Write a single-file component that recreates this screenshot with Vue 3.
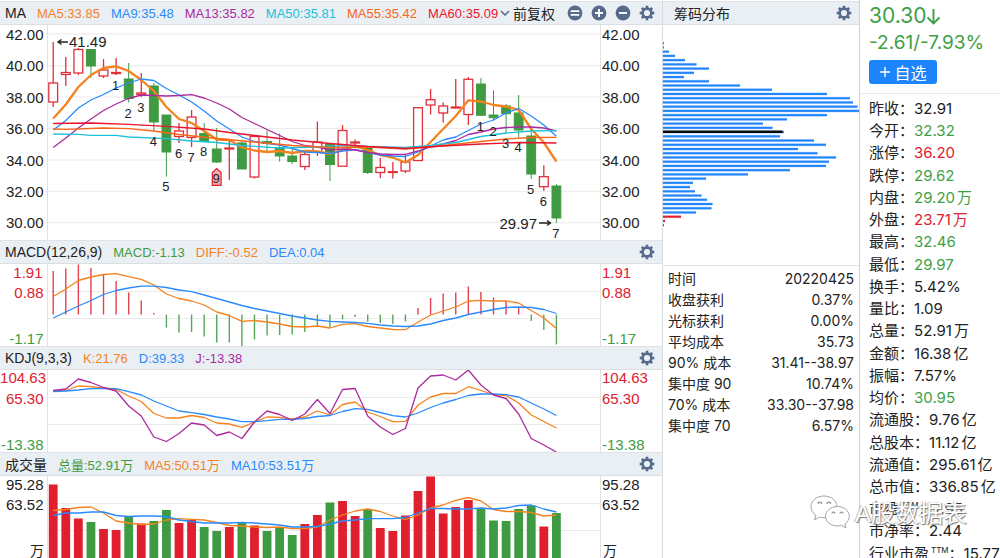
<script setup>
import { ref } from 'vue'

const adjust = ref('前复权')

const RED = '#e0202e'
const GREEN = '#3f9b42'
const ORANGE = '#f5821f'
const BLUE = '#2b8afc'
const PURPLE = '#ab2a9e'
const CYAN = '#20c0dc'

const px = (i) => +(53.2 + i * 12.58).toFixed(2)
const line = (ys) => ys.map((y, i) => `${px(i)},${y}`).join(' ')
const sparse = (pts) => pts.map(([i, y]) => `${px(i)},${y}`).join(' ')

/* high, body top, body bottom, low, direction */
const candles = [
  [42, 83, 102, 107, 'r'], [57, 72.5, 74.5, 86, 'r'], [48, 49.5, 73, 75, 'r'], [49, 49.5, 66, 78, 'g'],
  [59, 70, 76, 78, 'r'], [58, 72.5, 73.5, 75, 'r'], [63, 79, 98.5, 102.5, 'g'], [73, 93, 94.5, 97, 'r'],
  [83, 86, 122, 131, 'g'], [115, 115, 152, 176.5, 'g'], [123, 131, 136.5, 143, 'r'], [110, 117, 137.5, 147, 'r'],
  [123, 133.5, 141.5, 142, 'g'], [128, 149, 162, 163, 'g'], [139, 148, 149, 180, 'r'], [140.5, 143, 169, 169, 'g'],
  [136, 136.5, 177, 178.5, 'r'], [130.5, 141.5, 143.5, 151, 'g'], [133.5, 147.5, 156, 161.5, 'g'], [148.5, 156, 161.5, 164, 'g'],
  [151, 154.5, 166.5, 170, 'r'], [121.5, 142, 152, 156, 'r'], [144, 144.3, 164.5, 181, 'g'], [125, 130.5, 166.2, 166.2, 'r'],
  [139.5, 142, 143, 147.5, 'r'], [148, 148.5, 172.5, 174, 'g'], [158, 167.5, 172.5, 178, 'r'], [162, 171.7, 172.5, 178.5, 'r'],
  [154, 162, 171, 173, 'r'], [107.7, 107.7, 160.5, 160.5, 'r'], [89, 99.7, 105, 114.5, 'r'], [102.5, 106, 113, 122.5, 'r'],
  [79, 107, 108, 108.5, 'r'], [77, 79.3, 114.5, 125, 'r'], [78, 84, 115.3, 116, 'g'], [90.5, 115, 117.7, 120.5, 'g'],
  [104, 106, 113.7, 133, 'g'], [95, 113, 130, 137.5, 'g'], [126, 136, 174, 179, 'g'], [165.3, 176.7, 186.7, 190.7, 'r'],
  [184, 186, 218, 223, 'g']
].map(([high, top, bottom, low, d], i) => ({ x: px(i), high, top, bottom, low, up: d === 'r' }))

const ma5 = line([118.5, 104.5, 87, 75, 68, 66.3, 71, 80, 91, 107, 119, 123, 131, 139.5, 140, 147.5, 150.5, 152, 151, 153, 151, 151.5, 154, 150, 146.5, 150, 155, 157.5, 162.5, 155, 142, 129, 116, 100.3, 101.5, 105, 106.5, 110, 129, 142.5, 161.5])
const ma9 = line([130, 120.5, 108, 100, 94.5, 88, 83, 79, 80.5, 88.5, 95, 102, 111, 121, 129, 137, 141.5, 143.5, 145, 148.5, 152, 152.5, 153.5, 151, 149.5, 152.5, 155, 156, 156.5, 152, 146, 140, 137, 130.5, 124, 120, 113, 108.5, 116, 125, 136.3])
const ma13 = line([147.5, 138, 128, 119, 110.5, 104, 98.5, 95, 95.5, 96, 95.5, 94.7, 98, 103, 109, 117.5, 123.5, 129.5, 135.5, 141.5, 145.5, 147, 150, 149, 150, 152.5, 154, 154.5, 154.3, 151, 147, 144, 140.5, 134.5, 132, 129, 127.5, 127, 127, 128, 131])
const ma50 = sparse([[0, 134], [2, 134.3], [3, 135.3], [5, 135.3], [6, 137], [9, 138.7], [11, 141], [13, 142.5], [15, 145.5], [18, 148], [21, 147], [23, 145.7], [28, 147.5], [30, 145.5], [32, 142.5], [34, 136.5], [36, 133], [38, 131], [40, 130.7]])
const ma55 = sparse([[0, 129], [1, 129.3], [4, 128], [6, 128.6], [8, 131], [10, 134.5], [13, 138.5], [16, 142], [19, 145.5], [22, 147.5], [25, 147], [28, 149], [31, 145.5], [34, 141.5], [36, 139], [38, 137.5], [40, 137.3]])
const ma60 = sparse([[0, 123.5], [3, 123], [6, 124.3], [9, 126.3], [12, 129], [14, 132.5], [16, 135.5], [19, 140], [22, 143.5], [25, 146.5], [28, 148.5], [31, 146], [34, 144], [37, 142.5], [40, 143]])

const priceTicks = [['42.00', 34], ['40.00', 65.7], ['38.00', 97], ['36.00', 128.5], ['34.00', 160], ['32.00', 191.3], ['30.00', 222.7]]

const marks = [
  ['1', 5, 90], ['2', 6, 118], ['3', 7, 112], ['4', 8, 146], ['5', 9, 191], ['6', 10, 158], ['7', 11, 162], ['8', 12, 156],
  ['9', 13, 182.5], ['1', 34, 131], ['2', 35, 136], ['3', 36, 148], ['4', 37, 152], ['5', 38, 194], ['6', 39, 206], ['7', 40, 238]
].map(([t, i, y]) => ({ t, x: px(i) - 0.5, y }))

const macdBars = [271, 268.5, 264.5, 268, 274, 281, 292.5, 300.5, 313, 327.5, 332.5, 332, 336.5, 342.5, 342.5, 346, 339.5, 335.5, 335, 334.5, 332, 326, 327, 319.5, 317, 321.5, 323, 324, 321.5, 308, 298, 293.5, 292.5, 286.5, 292, 297.5, 301, 307.5, 321, 330, 344.5].map((y, i) => ({ x: px(i), y, up: y < 314.5 }))
const diff = line([296.5, 289, 280.5, 277, 274.5, 273.7, 276.7, 279.3, 285, 294, 298.5, 301, 305, 312, 315.5, 321.3, 320.5, 322, 324, 326.5, 327, 326, 328, 324.3, 323.7, 326.5, 328, 329.5, 329.7, 322, 315, 311, 307, 301, 300.3, 301, 301, 303, 310.5, 318, 328.5])
const dea = line([318, 312, 306, 300.5, 294.5, 290.5, 288, 286.2, 286.2, 287.5, 290, 291.7, 295, 298.5, 302, 305.5, 308.5, 311, 313.5, 316, 318, 320, 321.3, 322, 322.5, 323.3, 325, 326, 326.5, 326, 324, 320.5, 318, 314.5, 312, 309.5, 307.5, 307, 307.5, 309.5, 313.5])

const kdjJ = line([390.5, 389, 379, 382.5, 387.5, 391, 406, 416, 437, 441.5, 433.5, 423, 425, 435.5, 432, 438.5, 422, 411, 414.5, 420.5, 414, 399.5, 413.5, 389.5, 388.5, 416, 427, 434.5, 428.5, 388, 376, 375, 380, 370, 385, 395, 398.5, 414, 438.5, 445, 452])
const kdjK = line([391, 390.5, 386, 386.7, 388, 389.5, 396, 401.5, 413.5, 418, 418, 415.5, 417.5, 423, 424, 427.3, 422, 417, 417.3, 419, 417, 411, 415, 404.5, 402, 412, 416.5, 421.7, 421.3, 405, 397, 393.5, 393.5, 386.7, 390.5, 394.5, 395.5, 403, 415, 421.5, 428])
const kdjD = line([391.5, 391, 390, 388.7, 388.5, 388.7, 391.7, 395, 401, 406, 411, 412.7, 414.5, 417, 419, 421.7, 421.7, 420.7, 419.3, 419.3, 418.5, 416.5, 415.5, 411.5, 408.7, 409.3, 412.5, 415.7, 417, 413, 407.5, 403, 399.5, 395.5, 394, 394, 394.7, 397, 403, 409, 415.5])

const volColors = 'rrrgrrgrggrrggrgrgggrrgrrgrrrrrrrrgggggrg'
const volBars = [484.5, 508, 518.5, 522, 529, 530, 516, 523.5, 521, 510, 523, 519.5, 527, 531, 527, 522.5, 525.5, 531, 528, 535, 524, 515, 502.5, 501, 516, 509, 528, 531, 515.5, 491, 476.5, 513.5, 507, 500, 508, 520.5, 521, 509, 505.5, 526.5, 513].map((y, i) => ({ x: px(i) - 4.4, y, up: volColors[i] === 'r' }))
const vol5 = line([510.5, 509.5, 507.5, 507, 513, 521, 523, 524.5, 524, 520, 518.7, 519.3, 520, 522.5, 525.5, 526, 527, 527.5, 527, 528.5, 528.5, 527, 520, 515, 511, 509, 511.5, 516, 519.7, 515, 508, 505, 500.3, 497.5, 501, 509.5, 511.5, 511.5, 512.5, 516, 515])
const vol10 = line([515.5, 513, 513, 512, 512, 515.5, 516.5, 516, 516, 516.5, 520, 521.5, 523, 523, 523, 522.3, 523, 524, 525, 527, 527, 526.5, 524, 521, 520, 518.7, 518.7, 518.7, 517.5, 513, 508.3, 508.5, 509, 509, 508, 509, 508, 505.5, 505, 509, 512])

const chips = [1, 1, 6, 12, 22, 33.5, 46, 31, 21, 46, 77, 109, 164, 187, 190, 194.5, 197, 164, 124, 100, 109.5, 121, 117, 151, 163, 135, 154.5, 173, 166, 163, 127, 85, 43, 30, 27, 32, 38.5, 44, 49.5, 48.5, 33, 18, 2, 1]
  .map((w, i) => ({ w, y: +(42.2 + i * 4.232).toFixed(2), low: i > 40 }))

const maLegend = [
  ['MA5:33.85', ORANGE], ['MA9:35.48', BLUE], ['MA13:35.82', PURPLE], ['MA50:35.81', CYAN], ['MA55:35.42', '#fb6516'], ['MA60:35.09', '#f0142f']
]
const macdLegend = [['MACD:-1.13', GREEN], ['DIFF:-0.52', ORANGE], ['DEA:0.04', BLUE]]
const kdjLegend = [['K:21.76', ORANGE], ['D:39.33', BLUE], ['J:-13.38', PURPLE]]
const volLegend = [['总量:52.91万', GREEN], ['MA5:50.51万', ORANGE], ['MA10:53.51万', BLUE]]

const stats = [
  ['时间', '20220425'], ['收盘获利', '0.37%'], ['光标获利', '0.00%'], ['平均成本', '35.73'],
  ['90% 成本', '31.41--38.97'], ['集中度 90', '10.74%'], ['70% 成本', '33.30--37.98'], ['集中度 70', '6.57%']
]

const quotes = [
  { k: '昨收', v: '32.91' }, { k: '今开', v: '32.32', c: 'down' }, { k: '涨停', v: '36.20', c: 'up' }, { k: '跌停', v: '29.62', c: 'down' },
  { k: '内盘', v: '29.20', u: '万', c: 'down' }, { k: '外盘', v: '23.71', u: '万', c: 'up' }, { k: '最高', v: '32.46', c: 'down' }, { k: '最低', v: '29.97', c: 'down' },
  { k: '换手', v: '5.42%' }, { k: '量比', v: '1.09' }, { k: '总量', v: '52.91', u: '万' }, { k: '金额', v: '16.38', u: '亿' },
  { k: '振幅', v: '7.57%' }, { k: '均价', v: '30.95', c: 'down' }, { k: '流通股', v: '9.76', u: '亿' }, { k: '总股本', v: '11.12', u: '亿' },
  { k: '流通值', v: '295.61', u: '亿' }, { k: '总市值', v: '336.85', u: '亿' }, { k: '市盈', ttm: true, v: '7.95' }, { k: '市净率', v: '2.44' },
  { k: '行业市盈', ttm: true, v: '15.77' }
]
const teeth = [0, 45, 90, 135, 180, 225, 270, 315]
</script>

<template>
  <main class="page">
    <section class="charts">
      <header class="bar">
        <h2>MA</h2>
        <span v-for="[t, c] in maLegend" :key="t" :style="{ color: c }">{{ t }}</span>
        <div class="tools">
          <label class="adjust">
            <svg width="10" height="6" viewBox="0 0 10 6"><path d="M1 1l4 4 4-4" fill="none" stroke="#566a8c" stroke-width="1.5" /></svg>
            <select v-model="adjust" aria-label="复权方式">
              <option>前复权</option>
              <option>后复权</option>
              <option>不复权</option>
            </select>
          </label>
          <button class="icon" aria-label="重置">
            <svg viewBox="-8 -8 16 16"><circle r="7.4" fill="#566a8c" /><path d="M-4.3 -1.9H4.3M-4.3 1.9H4.3" stroke="#fff" stroke-width="1.6" /></svg>
          </button>
          <button class="icon" aria-label="放大">
            <svg viewBox="-8 -8 16 16"><circle r="7.4" fill="#566a8c" /><path d="M-4 0H4M0 -4V4" stroke="#fff" stroke-width="1.9" /></svg>
          </button>
          <button class="icon" aria-label="缩小">
            <svg viewBox="-8 -8 16 16"><circle r="7.4" fill="#566a8c" /><path d="M-4 0H4" stroke="#fff" stroke-width="1.9" /></svg>
          </button>
          <button class="icon" aria-label="均线设置">
            <svg viewBox="-8 -8 16 16" stroke="#566a8c"><circle r="4.4" fill="none" stroke-width="2.6" /><path v-for="a in teeth" :key="a" d="M0 -5V-7.3" stroke-width="2.6" :transform="`rotate(${a})`" /></svg>
          </button>
        </div>
      </header>
      <svg class="plot" viewBox="0 25 662 215">
        <g class="grid">
          <path v-for="[t, y] in priceTicks" :key="t" :d="`M46 ${y}H600.5`" />
          <path d="M47.5 25V240M600.5 25V240" class="frame" />
        </g>
        <g class="axis">
          <template v-for="[t, y] in priceTicks" :key="t">
            <text x="43.5" :y="y + 5.5" text-anchor="end">{{ t }}</text>
            <text x="602" :y="y + 5.5">{{ t }}</text>
          </template>
        </g>
        <g v-for="c in candles" :key="c.x" :class="c.up ? 'rise' : 'fall'">
          <path :d="`M${c.x} ${c.high}V${c.top}M${c.x} ${c.bottom}V${c.low}`" />
          <rect :x="c.x - 4.4" :y="c.top" width="8.8" :height="c.bottom - c.top" />
        </g>
        <path d="M212.3 185.3V172.5L216.7 168.5L221.1 172.5V185.3Z" fill="#f9a9ad" :stroke="RED" stroke-width="1.2" />
        <g class="lines">
          <polyline :points="ma5" :stroke="ORANGE" class="thick" />
          <polyline :points="ma9" :stroke="BLUE" />
          <polyline :points="ma13" :stroke="PURPLE" />
          <polyline :points="ma50" :stroke="CYAN" />
          <polyline :points="ma55" stroke="#fb6516" />
          <polyline :points="ma60" stroke="#e8132c" />
        </g>
        <g class="marks">
          <text v-for="m in marks" :key="m.x" :x="m.x" :y="m.y">{{ m.t }}</text>
        </g>
        <g class="peak">
          <path d="M68 42H58.5M61.5 39.5L58 42L61.5 44.5M539 223H549.5M547 220.5L550.5 223L547 225.5" />
          <text x="69" y="47">41.49</text>
          <text x="537" y="229" text-anchor="end">29.97</text>
        </g>
      </svg>

      <header class="bar">
        <h2>MACD(12,26,9)</h2>
        <span v-for="[t, c] in macdLegend" :key="t" :style="{ color: c }">{{ t }}</span>
        <div class="tools">
          <button class="icon" aria-label="MACD 设置">
            <svg viewBox="-8 -8 16 16" stroke="#566a8c"><circle r="4.4" fill="none" stroke-width="2.6" /><path v-for="a in teeth" :key="a" d="M0 -5V-7.3" stroke-width="2.6" :transform="`rotate(${a})`" /></svg>
          </button>
        </div>
      </header>
      <svg class="plot" viewBox="0 264 662 82">
        <g class="grid">
          <path d="M46 291.5H600.5M46 318.5H600.5" />
          <path d="M47.5 264V346M600.5 264V346" class="frame" />
        </g>
        <g class="axis">
          <g :fill="RED">
            <text x="42.5" y="278" text-anchor="end">1.91</text><text x="602" y="278">1.91</text>
            <text x="43.5" y="297.5" text-anchor="end">0.88</text><text x="602" y="297.5">0.88</text>
          </g>
          <g :fill="GREEN">
            <text x="43.5" y="344" text-anchor="end">-1.17</text><text x="602" y="344">-1.17</text>
          </g>
        </g>
        <path v-for="b in macdBars" :key="b.x" :d="`M${b.x} 314.5V${b.y}`" :stroke="b.up ? '#e5404d' : '#55a659'" stroke-width="1.4" />
        <g class="lines">
          <polyline :points="diff" :stroke="ORANGE" />
          <polyline :points="dea" :stroke="BLUE" />
        </g>
      </svg>

      <header class="bar">
        <h2>KDJ(9,3,3)</h2>
        <span v-for="[t, c] in kdjLegend" :key="t" :style="{ color: c }">{{ t }}</span>
        <div class="tools">
          <button class="icon" aria-label="KDJ 设置">
            <svg viewBox="-8 -8 16 16" stroke="#566a8c"><circle r="4.4" fill="none" stroke-width="2.6" /><path v-for="a in teeth" :key="a" d="M0 -5V-7.3" stroke-width="2.6" :transform="`rotate(${a})`" /></svg>
          </button>
        </div>
      </header>
      <svg class="plot" viewBox="0 370 662 82">
        <g class="grid">
          <path d="M46 397.5H600.5M46 424.5H600.5" />
          <path d="M47.5 370V452M600.5 370V452" class="frame" />
        </g>
        <g class="axis">
          <g :fill="RED">
            <text x="46" y="383" text-anchor="end">104.63</text><text x="602" y="383">104.63</text>
            <text x="43.5" y="403.5" text-anchor="end">65.30</text><text x="602" y="403.5">65.30</text>
          </g>
          <g :fill="GREEN">
            <text x="43.5" y="450" text-anchor="end">-13.38</text><text x="602" y="450">-13.38</text>
          </g>
        </g>
        <g class="lines">
          <polyline :points="kdjK" :stroke="ORANGE" />
          <polyline :points="kdjD" :stroke="BLUE" />
          <polyline :points="kdjJ" :stroke="PURPLE" />
        </g>
      </svg>

      <header class="bar">
        <h2>成交量</h2>
        <span v-for="[t, c] in volLegend" :key="t" :style="{ color: c }">{{ t }}</span>
        <div class="tools">
          <button class="icon" aria-label="成交量设置">
            <svg viewBox="-8 -8 16 16" stroke="#566a8c"><circle r="4.4" fill="none" stroke-width="2.6" /><path v-for="a in teeth" :key="a" d="M0 -5V-7.3" stroke-width="2.6" :transform="`rotate(${a})`" /></svg>
          </button>
        </div>
      </header>
      <svg class="plot" viewBox="0 476 662 82">
        <g class="grid">
          <path d="M46 503.5H600.5M46 530.5H600.5" />
          <path d="M47.5 476V558M600.5 476V558" class="frame" />
        </g>
        <g class="axis">
          <text x="43.5" y="490" text-anchor="end">95.28</text><text x="602" y="490">95.28</text>
          <text x="43.5" y="509.5" text-anchor="end">63.52</text><text x="602" y="509.5">63.52</text>
          <g class="unit-label">
            <text x="44" y="556" text-anchor="end">万</text><text x="603" y="556">万</text>
          </g>
        </g>
        <rect v-for="b in volBars" :key="b.x" :x="b.x" :y="b.y" width="8.8" :height="558 - b.y" :fill="b.up ? '#df1f2d' : '#3f9b42'" />
        <g class="lines">
          <polyline :points="vol5" :stroke="ORANGE" />
          <polyline :points="vol10" :stroke="BLUE" />
        </g>
      </svg>
    </section>

    <section class="chips">
      <header class="bar">
        <h2 class="inset">筹码分布</h2>
        <div class="tools">
          <button class="icon" aria-label="筹码设置">
            <svg viewBox="-8 -8 16 16" stroke="#566a8c"><circle r="4.4" fill="none" stroke-width="2.6" /><path v-for="a in teeth" :key="a" d="M0 -5V-7.3" stroke-width="2.6" :transform="`rotate(${a})`" /></svg>
          </button>
        </div>
      </header>
      <svg class="plot" viewBox="0 25 196 240">
        <g v-for="c in chips" :key="c.y">
          <rect :y="c.y - 0.6" :width="c.w" height="3.2" :fill="c.low ? '#fbdcde' : '#cfe4ff'" />
          <rect :y="c.y" :width="c.w" height="2" :fill="c.low ? RED : '#1f84fb'" />
        </g>
        <rect y="130.5" width="119.5" height="2.5" fill="#0a0a0a" />
      </svg>
      <dl class="stats">
        <div v-for="[k, v] in stats" :key="k">
          <dt>{{ k }}</dt>
          <dd>{{ v }}</dd>
        </div>
      </dl>
    </section>

    <aside class="quote">
      <div class="top">
        <div class="price">30.30<svg width="15" height="17" viewBox="0 0 15 17"><path d="M7.5 1V15.500M1.5 9.5L7.5 15.5L13.5 9.5" fill="none" stroke="#3f9f45" stroke-width="1.9" /></svg></div>
        <div class="change">-2.61/-7.93%</div>
        <button class="add">
          <svg width="12" height="12" viewBox="0 0 12 12"><path d="M6 1V11M1 6H11" stroke="#fff" stroke-width="1.4" /></svg>自选
        </button>
      </div>
      <dl class="list">
        <div v-for="q in quotes" :key="q.k">
          <dt>{{ q.k }}<sup v-if="q.ttm">TTM</sup>：</dt>
          <dd :class="q.c">{{ q.v }}<span v-if="q.u" class="unit">{{ q.u }}</span></dd>
        </div>
      </dl>
    </aside>

    <div class="watermark">
      <svg width="40" height="34" viewBox="0 0 40 34">
        <g fill="#fff" stroke="#a4a4a4" stroke-width="1">
          <path d="M14 1C6.5 1 1 5.7 1 11.8C1 15.3 2.9 18.3 5.8 20.3L4.5 25L9.6 22.1C11 22.5 12.5 22.7 14 22.7C21.5 22.7 27 17.9 27 11.8C27 5.7 21.5 1 14 1Z" />
          <path d="M27.5 11.5C20.8 11.5 15.5 15.9 15.5 21.3C15.5 26.7 20.8 31 27.5 31C29 31 30.3 30.8 31.6 30.4L36 33L34.9 28.9C37.5 27.1 39.3 24.4 39.3 21.3C39.3 15.9 34.1 11.5 27.5 11.5Z" />
        </g>
        <g fill="none" stroke="#8a8a8a" stroke-width="1.2">
          <path d="M8 9a1.8 1.8 0 0 1 3.6 0M17 9a1.8 1.8 0 0 1 3.6 0M22 18.5a1.5 1.5 0 0 1 3 0M30 18.5a1.5 1.5 0 0 1 3 0" />
        </g>
      </svg>
      <span>A股数据表</span>
    </div>
  </main>
</template>

<style>
body {
  background: #fff;
  overflow: hidden;
}
</style>

<style scoped>
.page {
  position: relative;
  display: grid;
  grid-template-columns: minmax(0, 1fr) 198px 140px;
  height: 100vh;
  overflow: hidden;
  color: #222;
  font-family: "Liberation Sans", "Noto Sans CJK SC", sans-serif;
  font-size: 13px;
}
.charts,
.chips {
  padding-top: 1px;
  min-width: 0;
}
.chips {
  border-left: 1px solid #d9dde1;
  border-right: 1px solid #c8d2dc;
}
.bar {
  display: flex;
  align-items: center;
  gap: 11px;
  height: 24px;
  box-sizing: border-box;
  padding: 0 7px 0 5px;
  background: #eaeff4;
  border-top: 1px solid #dfe3e7;
  border-bottom: 1px solid #dcdfe2;
  white-space: nowrap;
}
.bar h2 {
  margin: 0;
  font-size: 14px;
  font-weight: 400;
}
.bar .inset {
  padding-left: 6px;
}
.tools {
  display: flex;
  align-items: center;
  gap: 8px;
  margin-left: auto;
}
.adjust {
  display: flex;
  align-items: center;
  gap: 3px;
  margin: 0 4px 0 -16px;
}
.adjust select {
  appearance: none;
  border: 0;
  padding: 0;
  background: none;
  color: #222;
  font: 14px "Noto Sans CJK SC", sans-serif;
}
.icon {
  display: block;
  width: 16px;
  height: 16px;
  border: 0;
  padding: 0;
  background: none;
}
.icon svg {
  display: block;
}
.plot {
  display: block;
  width: 100%;
  height: auto;
}
.grid path {
  fill: none;
  stroke: #ebebeb;
}
.grid .frame {
  stroke: #e2e2e2;
}
.axis {
  font-size: 15px;
  fill: #222;
}
.unit-label {
  font-size: 14px;
}
.rise path,
.rise rect {
  fill: #fff;
  stroke: #e0303c;
  stroke-width: 1.3;
}
.fall path,
.fall rect {
  fill: #3f9b42;
  stroke: #3f9b42;
  stroke-width: 1;
}
.lines {
  fill: none;
  stroke-width: 1.3;
  stroke-linejoin: round;
}
.thick {
  stroke-width: 2.3;
}
.marks {
  font-size: 13px;
  text-anchor: middle;
  fill: #222;
}
.peak {
  font-size: 15px;
  fill: #222;
}
.peak path {
  fill: none;
  stroke: #222;
  stroke-width: 1.3;
}
.stats {
  margin: 0;
  padding: 2px 5px 0;
  border-top: 1px solid #e0e2e4;
  font-family: Inter, "Noto Sans CJK SC", sans-serif;
  font-size: 14px;
  line-height: 21px;
}
.stats div {
  display: flex;
  justify-content: space-between;
}
.stats dd {
  margin: 0;
}
.quote {
  display: flex;
  flex-direction: column;
  min-height: 0;
  font-family: Inter, "Noto Sans CJK SC", sans-serif;
  white-space: nowrap;
}
.top {
  display: flex;
  flex-direction: column;
  align-items: flex-start;
  padding: 2px 0 9px 9px;
  border-bottom: 1px solid #e6e8ea;
  color: #3f9f45;
}
.price {
  display: flex;
  align-items: center;
  font-size: 21px;
  line-height: 28px;
}
.change {
  font-size: 19px;
  line-height: 26px;
  margin-bottom: 4px;
}
.add {
  display: flex;
  align-items: center;
  justify-content: center;
  gap: 3px;
  width: 68px;
  height: 24px;
  border: 0;
  border-radius: 3px;
  padding: 0;
  background: #1c84fc;
  color: #fff;
  font: 16px/24px "Noto Sans CJK SC", sans-serif;
}
.list {
  display: flex;
  flex: 1;
  flex-direction: column;
  min-height: 0;
  margin: 4px 0 -7px;
  padding-left: 9px;
  font-size: 15px;
  line-height: 22px;
}
.list div {
  display: flex;
  flex: 1 0 22px;
}
.list dt,
.list dd {
  margin: 0;
}
.list sup {
  font-size: 8px;
  line-height: 8px;
  vertical-align: 6px;
  margin-left: 2px;
}
.unit {
  margin-left: 2px;
}
.up {
  color: #e0202e;
}
.down {
  color: #3f9f45;
}
.watermark {
  position: absolute;
  right: 33px;
  bottom: 26px;
  display: flex;
  align-items: center;
  gap: 5px;
  color: #fff;
  font-size: 24px;
  line-height: 36px;
  text-shadow: 1px 1px 1px #777, -1px 0 1px #bbb;
  pointer-events: none;
}
.watermark span {
  padding-top: 4px;
}
</style>
